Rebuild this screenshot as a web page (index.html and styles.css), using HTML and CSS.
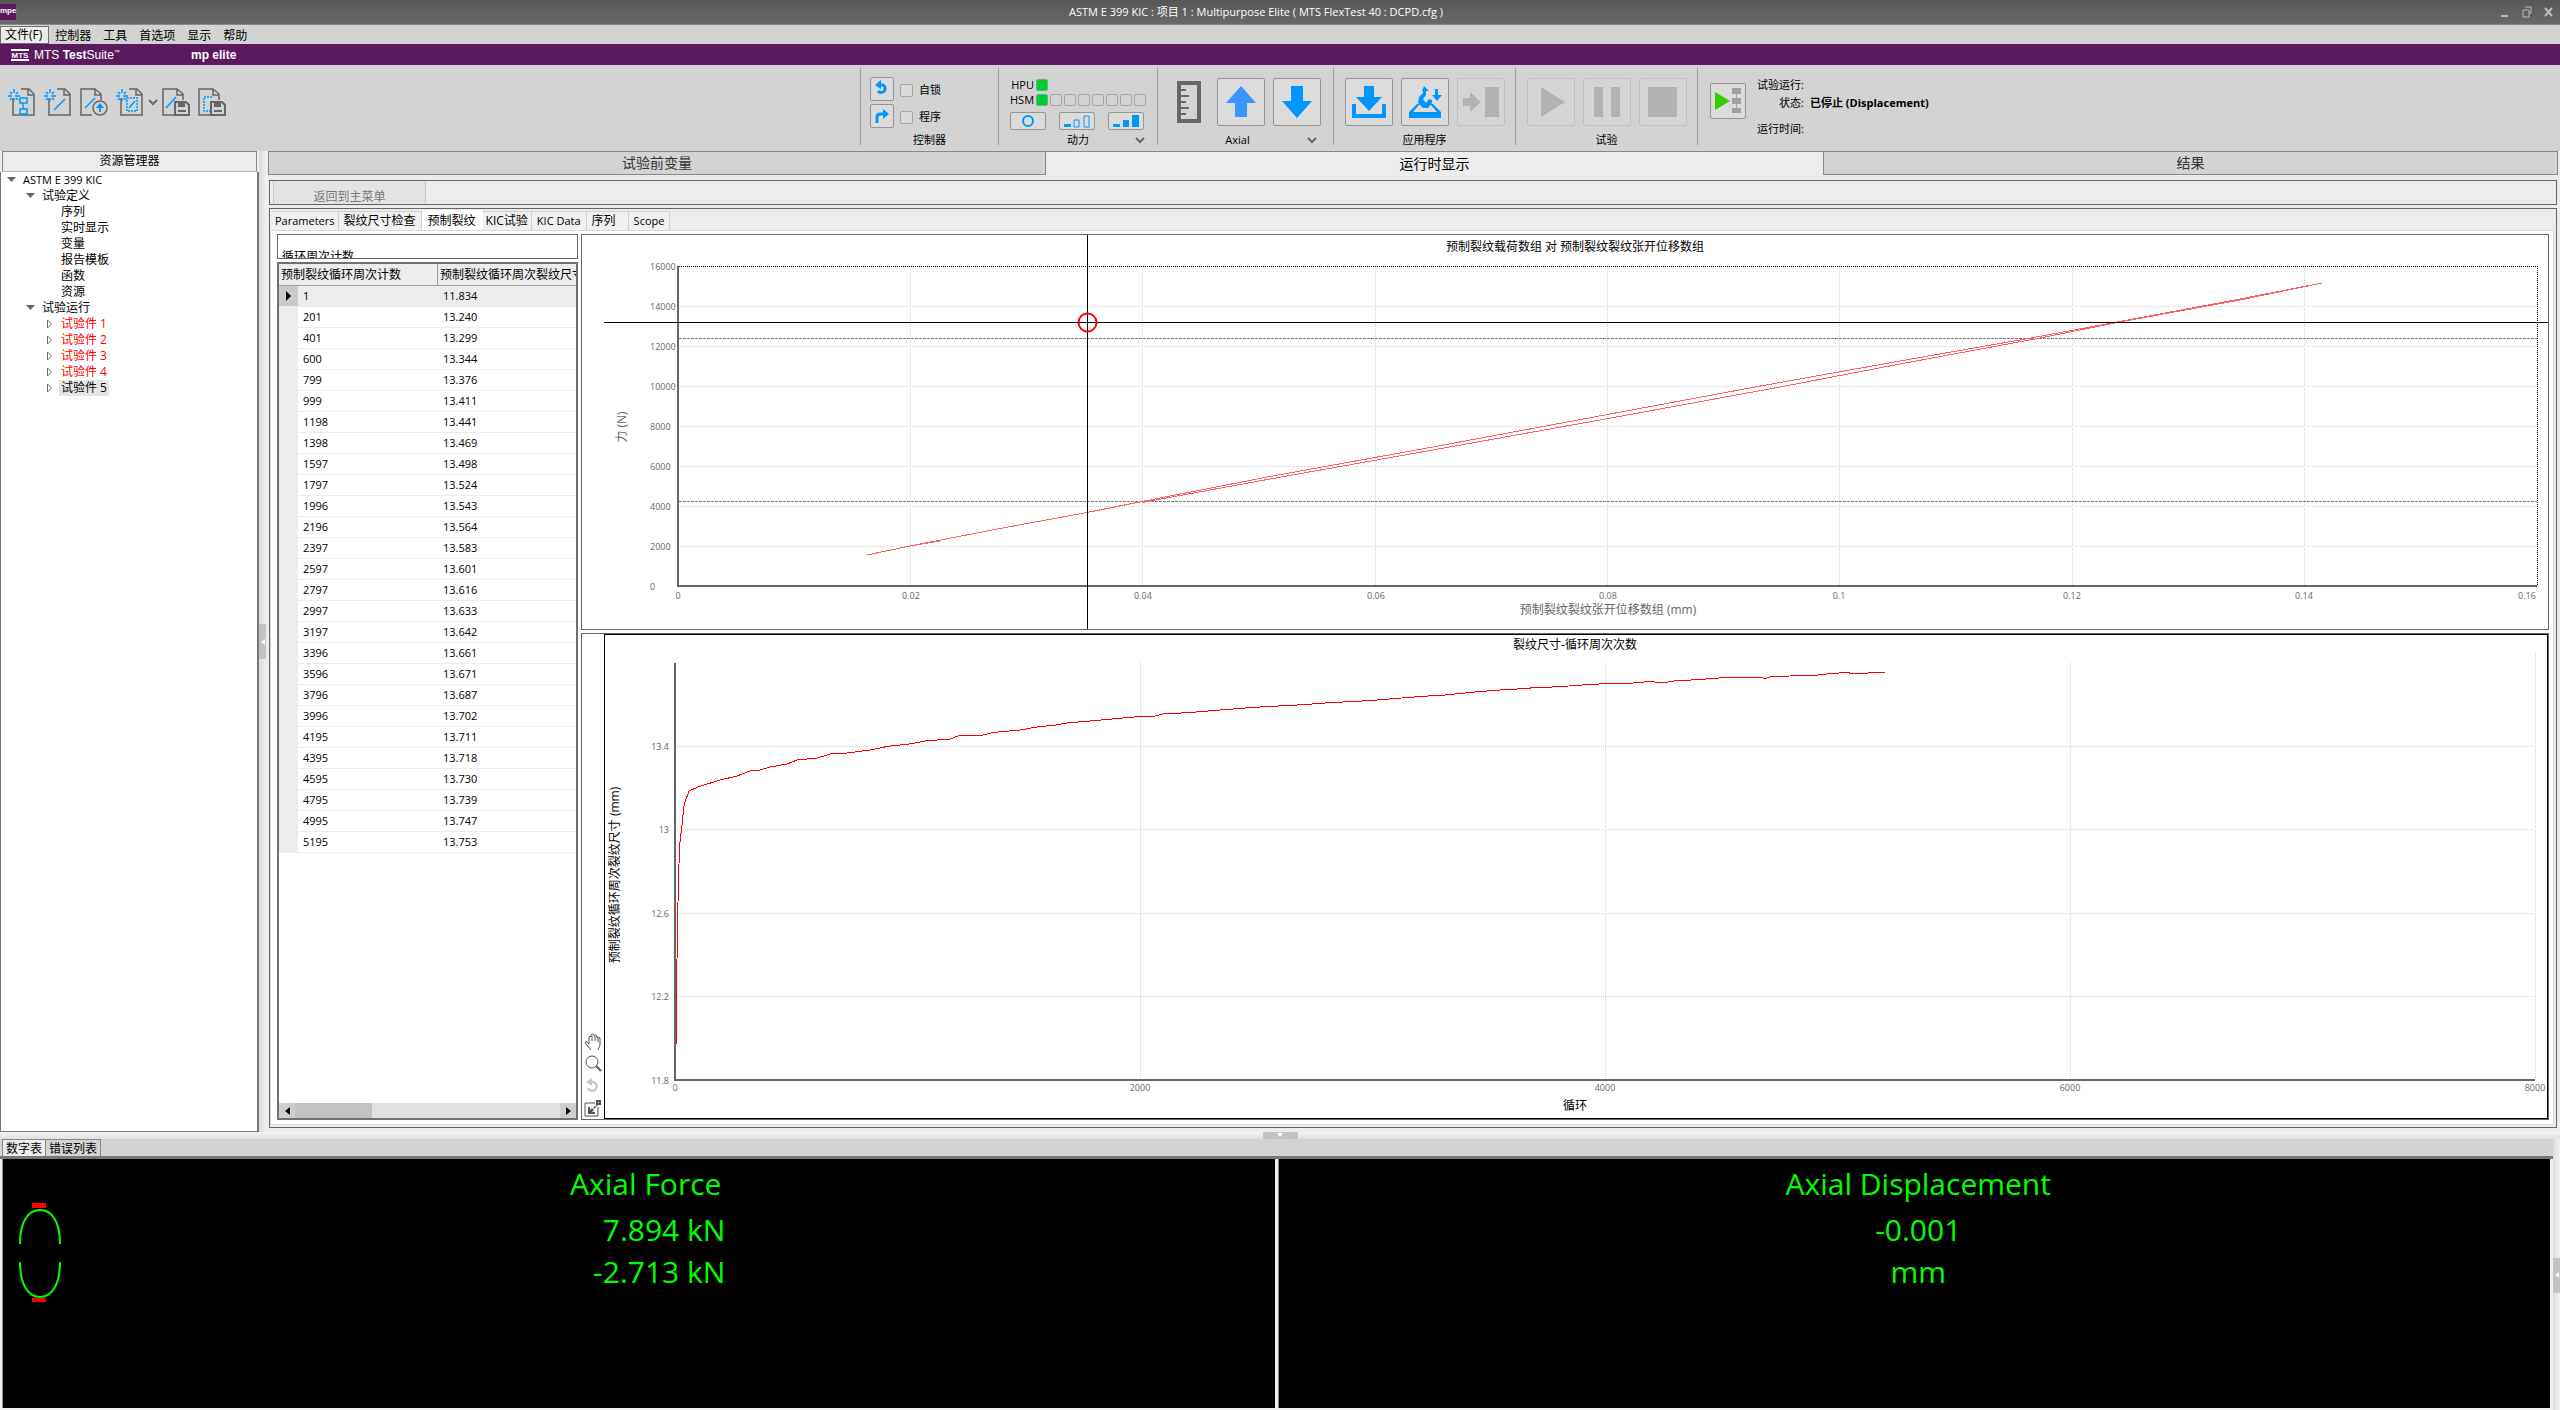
FILE: index.html
```html
<!DOCTYPE html>
<html lang="zh-CN">
<head>
<meta charset="utf-8">
<title>Multipurpose Elite</title>
<link rel="stylesheet" href="styles.css">
</head>
<body>
<header class="titlebar">
  <span class="app-icon">mpe</span>
  <h1>ASTM E 399 KIC : 项目 1 : Multipurpose Elite ( MTS FlexTest 40 : DCPD.cfg )</h1>
  <div class="window-buttons">
    <button aria-label="最小化"><svg width="10" height="12"><path d="M1 9h7v2H1z" fill="#b9bcc0"/></svg></button>
    <button aria-label="还原"><svg width="10" height="12"><path d="M3 1h6v6h-2M1 4h6v7H1z" fill="none" stroke="#b9bcc0"/></svg></button>
    <button aria-label="关闭"><svg width="10" height="12"><path d="M1 2l7 8M8 2L1 10" stroke="#b9bcc0" stroke-width="2"/></svg></button>
  </div>
</header>

<nav class="menubar">
  <button class="active">文件(F)</button><button>控制器</button><button>工具</button><button>首选项</button><button>显示</button><button>帮助</button>
</nav>

<div class="brand">
  <svg width="18" height="12" viewBox="0 0 18 12"><path d="M0 0h18v2H0zM0 10h18v2H0z" fill="#fff"/><text x="9" y="9" text-anchor="middle" class="logo-text">MTS</text></svg>
  <span class="suite">MTS <b>Test</b>Suite<sup>™</sup></span>
  <b class="product">mp elite</b>
</div>

<div class="toolbar">
  <div class="file-tools">
    <button aria-label="新建试验"><svg width="28" height="28"><path d="M5 10v17h21V6l-5-5h-8M20 1v6h6" fill="none" stroke="#666" stroke-width="1.5"/><path d="M12 10h7v5h-7zM12 21h7v5h-7zM15 15v6M0 8h4m3 0h5M6 1v4m0 5v3M2 4l2 2m4 4l2 2M2 12l2-2m4-4l2-2" fill="none" stroke="#0096ff" stroke-width="1.5"/></svg></button>
    <button aria-label="新建试验运行"><svg width="28" height="28"><path d="M5 10v17h21V6l-5-5h-8M20 1v6h6" fill="none" stroke="#666" stroke-width="1.5"/><path d="M10 22l11-11M0 8h4m3 0h5M6 1v4m0 5v3M2 4l2 2m4 4l2 2M2 12l2-2m4-4l2-2" fill="none" stroke="#0096ff" stroke-width="1.5"/></svg></button>
    <button aria-label="打开试验"><svg width="28" height="28"><path d="M12 27H1V1h14l6 5v6M15 1v6h6" fill="none" stroke="#666" stroke-width="1.5"/><path d="M5 20l10-10" stroke="#0096ff" stroke-width="1.5"/><circle cx="20" cy="20" r="7" fill="#d3d3d3" stroke="#666" stroke-width="1.5"/><path d="M20 15l4 5h-3v4h-2v-4h-3z" fill="#0096ff"/></svg></button>
    <button aria-label="从模板新建"><svg width="28" height="28"><path d="M5 10v17h21V6l-5-5h-8M20 1v6h6" fill="none" stroke="#666" stroke-width="1.5"/><path d="M11 10h10v13H11z" fill="none" stroke="#0096ff" stroke-width="1.5" stroke-dasharray="2 1"/><path d="M13 20l6-7M0 8h4m3 0h5M6 1v4m0 5v3M2 4l2 2m4 4l2 2M2 12l2-2m4-4l2-2" fill="none" stroke="#0096ff" stroke-width="1.5"/></svg></button>
    <button class="drop" aria-label="更多"><svg width="10" height="8"><path d="M1 2l4 4 4-4" fill="none" stroke="#666" stroke-width="2"/></svg></button>
    <button aria-label="保存试验"><svg width="28" height="28"><path d="M12 27H1V1h14l6 5v6M15 1v6h6" fill="none" stroke="#666" stroke-width="1.5"/><path d="M4 20l10-11" stroke="#0096ff" stroke-width="1.5"/><path d="M13 14h11l3 3v10H13z" fill="#d3d3d3" stroke="#666" stroke-width="2"/><path d="M16 14h7v5h-7zM16 22h8v2h-8z" fill="#666"/></svg></button>
    <button aria-label="另存为模板"><svg width="28" height="28"><path d="M12 27H1V1h14l6 5v6M15 1v6h6" fill="none" stroke="#666" stroke-width="1.5"/><path d="M14 9H6v14h6" fill="none" stroke="#0096ff" stroke-width="1.5" stroke-dasharray="2 1"/><path d="M13 14h11l3 3v10H13z" fill="#d3d3d3" stroke="#666" stroke-width="2"/><path d="M16 14h7v5h-7zM16 22h8v2h-8z" fill="#666"/></svg></button>
  </div>

  <section class="group controller">
    <div class="lock-rows">
      <div><button class="tool small" aria-label="复位"><svg width="18" height="18"><path d="M6 5h4a4 4 0 1 1-5 6" fill="none" stroke="#0096ff" stroke-width="3"/><path d="M2 5l6-5v9z" fill="#0096ff"/></svg></button><label><input type="checkbox">自锁</label></div>
      <div><button class="tool small" aria-label="重做"><svg width="18" height="18"><path d="M4 16v-6q0-3 3-3h4" fill="none" stroke="#0096ff" stroke-width="3"/><path d="M10 2l6 5-6 5z" fill="#0096ff"/></svg></button><label><input type="checkbox">程序</label></div>
    </div>
    <div class="caption"><span></span><span>控制器</span><span></span></div>
  </section>

  <section class="group power">
    <div class="power-rows">
      <div class="leds"><span>HPU</span><i class="on"></i></div>
      <div class="leds"><span>HSM</span><i class="on"></i><i></i><i></i><i></i><i></i><i></i><i></i><i></i></div>
      <div class="power-buttons">
        <button class="tool flat" aria-label="关闭动力"><svg width="28" height="14"><circle cx="14" cy="7" r="5" fill="none" stroke="#0096ff" stroke-width="2"/></svg></button>
        <button class="tool flat" aria-label="低压"><svg width="28" height="14"><path d="M1 10h7v3H1z" fill="#0096ff"/><path d="M11 6h5v7h-5zM21 2h5v11h-5z" fill="none" stroke="#0096ff"/></svg></button>
        <button class="tool flat" aria-label="高压"><svg width="28" height="14"><path d="M1 10h7v3H1zM11 6h6v7h-6zM20 1h7v12h-7z" fill="#0096ff"/></svg></button>
      </div>
    </div>
    <div class="caption"><span></span><span>动力</span><svg width="10" height="8"><path d="M1 2l4 4 4-4" fill="none" stroke="#666" stroke-width="2"/></svg></div>
  </section>

  <section class="group axial">
    <div class="big-row">
      <svg class="ruler" width="24" height="42"><path d="M2 2h20v38H2z" fill="none" stroke="#666" stroke-width="4"/><path d="M4 9h5M4 15h8M4 21h5M4 27h8M4 33h5" stroke="#666" stroke-width="2"/></svg>
      <button class="tool" aria-label="上升"><svg width="34" height="34"><path d="M17 1l15 17h-9v14H11V18H2z" fill="#3a96ff"/></svg></button>
      <button class="tool" aria-label="下降"><svg width="34" height="34"><path d="M17 33L2 16h9V1h12v15h9z" fill="#0096ff"/></svg></button>
    </div>
    <div class="caption"><span></span><span>Axial</span><svg width="10" height="8"><path d="M1 2l4 4 4-4" fill="none" stroke="#666" stroke-width="2"/></svg></div>
  </section>

  <section class="group apps">
    <div class="big-row">
      <button class="tool" aria-label="下载"><svg width="36" height="34"><path d="M18 26L5 12h8V1h10v11h8z" fill="#0096ff"/><path d="M3 19v12h30V19" fill="none" stroke="#0096ff" stroke-width="4"/></svg></button>
      <button class="tool" aria-label="手动控制"><svg width="36" height="34"><path d="M2 33v-6l8-8h3l-7 8h24l-7-8h3l8 8v6z" fill="#0096ff"/><path d="M15 6L17 1l5 5h-3v4l-3 4 3 4 3-4 3 1v3l-4 5h-5l-5-5 1-6 4-4V6zM30 16l-5-6h3V4h3v6h4z" fill="#0096ff"/></svg></button>
      <button class="tool" disabled aria-label="退出"><svg width="36" height="34"><path d="M22 2h14v30H22zM0 13h7V7l11 10L7 27v-6H0z" fill="#b2b2b2"/></svg></button>
    </div>
    <div class="caption"><span></span><span>应用程序</span><span></span></div>
  </section>

  <section class="group test">
    <div class="big-row">
      <button class="tool" disabled aria-label="运行"><svg width="34" height="34"><path d="M7 2l24 15L7 32z" fill="#b2b2b2"/></svg></button>
      <button class="tool" disabled aria-label="暂停"><svg width="34" height="34"><path d="M4 2h9v30H4zM21 2h9v30h-9z" fill="#b2b2b2"/></svg></button>
      <button class="tool" disabled aria-label="停止"><svg width="34" height="34"><path d="M2 2h29v30H2z" fill="#b2b2b2"/></svg></button>
    </div>
    <div class="caption"><span></span><span>试验</span><span></span></div>
  </section>

  <section class="group status">
    <button class="tool medium" aria-label="运行序列"><svg width="28" height="28"><path d="M1 5l15 9-15 9z" fill="#33cc00"/><path d="M18 1h9v6h-9zM18 11h9v6h-9zM18 21h9v5h-9zM22 7h1v4h-1zM22 17h1v4h-1z" fill="#a0a0a0"/></svg></button>
    <dl>
      <dt>试验运行:</dt><dd></dd>
      <dt>状态:</dt><dd>已停止 (Displacement)</dd>
      <dt>运行时间:</dt><dd></dd>
    </dl>
  </section>
</div>

<main class="workspace">
  <aside class="explorer">
    <h2>资源管理器</h2>
    <ul class="tree">
      <li><span class="root"><svg width="9" height="6"><path d="M0 0h9L4.500 5z" fill="#666"/></svg>ASTM E 399 KIC</span>
        <ul>
          <li><span><svg width="9" height="6"><path d="M0 0h9L4.500 5z" fill="#666"/></svg>试验定义</span>
            <ul class="leaves"><li>序列</li><li>实时显示</li><li>变量</li><li>报告模板</li><li>函数</li><li>资源</li></ul>
          </li>
          <li><span><svg width="9" height="6"><path d="M0 0h9L4.500 5z" fill="#666"/></svg>试验运行</span>
            <ul class="runs">
              <li><span class="failed"><svg width="6" height="10"><path d="M.5 1v8l4-4z" fill="none" stroke="#666"/></svg>试验件 1</span></li>
              <li><span class="failed"><svg width="6" height="10"><path d="M.5 1v8l4-4z" fill="none" stroke="#666"/></svg>试验件 2</span></li>
              <li><span class="failed"><svg width="6" height="10"><path d="M.5 1v8l4-4z" fill="none" stroke="#666"/></svg>试验件 3</span></li>
              <li><span class="failed"><svg width="6" height="10"><path d="M.5 1v8l4-4z" fill="none" stroke="#666"/></svg>试验件 4</span></li>
              <li><span><svg width="6" height="10"><path d="M.5 1v8l4-4z" fill="none" stroke="#666"/></svg><em>试验件 5</em></span></li>
            </ul>
          </li>
        </ul>
      </li>
    </ul>
  </aside>
  <div class="splitter-v"><div class="grip-v"><svg width="4" height="6"><path d="M4 0v6L0 3z" fill="#fff"/></svg></div></div>

  <div class="main">
    <nav class="page-tabs"><button>试验前变量</button><button class="active">运行时显示</button><button>结果</button></nav>
    <div class="page">
      <div class="return-bar"><button disabled>返回到主菜单</button></div>
      <div class="display">
        <nav class="display-tabs"><button class="latin tight">Parameters</button><button>裂纹尺寸检查</button><button class="active">预制裂纹</button><button class="mixed">KIC试验</button><button class="latin">KIC Data</button><button class="wide">序列</button><button class="latin">Scope</button></nav>
        <div class="display-body">
          <div class="data-col">
            <div class="count-box">循环周次计数</div>
            <div class="grid-box">
              <div class="grid-scroll">
              <table>
                <colgroup><col class="c-mark"><col class="c-count"><col></colgroup>
                <thead><tr><th colspan="2">预制裂纹循环周次计数</th><th>预制裂纹循环周次裂纹尺寸</th></tr></thead>
                <tbody>
                  <tr class="current"><td><svg width="5" height="10"><path d="M0 0v10l5-5z"/></svg></td><td>1</td><td>11.834</td></tr>
                  <tr><td></td><td>201</td><td>13.240</td></tr>
                  <tr><td></td><td>401</td><td>13.299</td></tr>
                  <tr><td></td><td>600</td><td>13.344</td></tr>
                  <tr><td></td><td>799</td><td>13.376</td></tr>
                  <tr><td></td><td>999</td><td>13.411</td></tr>
                  <tr><td></td><td>1198</td><td>13.441</td></tr>
                  <tr><td></td><td>1398</td><td>13.469</td></tr>
                  <tr><td></td><td>1597</td><td>13.498</td></tr>
                  <tr><td></td><td>1797</td><td>13.524</td></tr>
                  <tr><td></td><td>1996</td><td>13.543</td></tr>
                  <tr><td></td><td>2196</td><td>13.564</td></tr>
                  <tr><td></td><td>2397</td><td>13.583</td></tr>
                  <tr><td></td><td>2597</td><td>13.601</td></tr>
                  <tr><td></td><td>2797</td><td>13.616</td></tr>
                  <tr><td></td><td>2997</td><td>13.633</td></tr>
                  <tr><td></td><td>3197</td><td>13.642</td></tr>
                  <tr><td></td><td>3396</td><td>13.661</td></tr>
                  <tr><td></td><td>3596</td><td>13.671</td></tr>
                  <tr><td></td><td>3796</td><td>13.687</td></tr>
                  <tr><td></td><td>3996</td><td>13.702</td></tr>
                  <tr><td></td><td>4195</td><td>13.711</td></tr>
                  <tr><td></td><td>4395</td><td>13.718</td></tr>
                  <tr><td></td><td>4595</td><td>13.730</td></tr>
                  <tr><td></td><td>4795</td><td>13.739</td></tr>
                  <tr><td></td><td>4995</td><td>13.747</td></tr>
                  <tr><td></td><td>5195</td><td>13.753</td></tr>
                </tbody>
              </table>
              </div>
              <div class="hscroll">
                <button aria-label="向左"><svg width="5" height="8"><path d="M5 0v8L0 4z"/></svg></button>
                <div class="track"><div class="thumb"></div></div>
                <button aria-label="向右"><svg width="5" height="8"><path d="M0 0v8l5-4z"/></svg></button>
              </div>
            </div>
          </div>

          <div class="chart-col">
            <figure class="chart load">
              <svg viewBox="582 235 1966 394">
                <g class="gridlines">
                  <path d="M680 306.500H2537M680 346.500H2537M680 386.500H2537M680 426.500H2537M680 466.500H2537M680 506.500H2537M680 546.500H2537"/>
                  <path d="M910.500 268V585M1142.500 268V585M1375.500 268V585M1607.500 268V585M1839.500 268V585M2072.500 268V585M2304.500 268V585"/>
                </g>
                <path class="frame" d="M679 266.500H2537.500V586"/>
                <path class="limit" d="M679 338.500H2537M679 501.500H2537"/>
                <path class="axis" d="M678 266V586H2537"/>
                <path class="load-line" d="M867 555L910 546 1000 528.500 1087 512.500 1142 501.500 1270 476.500 1430 447.500 1578 420 1755 387 1900 361 2031 338 2117 322 2240 299 2322 283M2322 283L2240 300 2117 322.500 2040 338 1900 364 1780 387 1600 420 1430 450.500 1270 479 1142 502.500M910 546L940 541"/>
                <path class="cross" d="M1087.500 235V629M604 322.500H2548"/>
                <circle class="cursor" cx="1087.500" cy="322.500" r="9"/>
                <text class="title" x="1575" y="251">预制裂纹载荷数组 对 预制裂纹裂纹张开位移数组</text>
                <g class="ticks-y">
                  <text x="650" y="270">16000</text><text x="650" y="310">14000</text><text x="650" y="350">12000</text><text x="650" y="390">10000</text><text x="650" y="430">8000</text><text x="650" y="470">6000</text><text x="650" y="510">4000</text><text x="650" y="550">2000</text><text x="650" y="590">0</text>
                </g>
                <g class="ticks-x">
                  <text x="678" y="599">0</text><text x="911" y="599">0.02</text><text x="1143" y="599">0.04</text><text x="1376" y="599">0.06</text><text x="1608" y="599">0.08</text><text x="1839" y="599">0.1</text><text x="2072" y="599">0.12</text><text x="2304" y="599">0.14</text><text x="2527" y="599">0.16</text>
                </g>
                <text class="name muted" x="1608" y="614">预制裂纹裂纹张开位移数组 (mm)</text>
                <text class="name muted" transform="translate(626 427) rotate(-90)">力 (N)</text>
              </svg>
            </figure>
            <figure class="chart growth">
              <div class="chart-tools">
                <button aria-label="平移"><svg width="18" height="18"><path d="M7 17L2 11q-2-3 1-2l2 2V4q1-2 2 0V2q1.500-2 3 0v1q2-2 3 0v2q2-2 3 0v7l-2 5M8 3v5M11 3v5M14 5v4" fill="none" stroke="#555"/></svg></button>
                <button aria-label="缩放"><svg width="18" height="18"><circle cx="8" cy="7" r="6" fill="none" stroke="#555"/><path d="M12 11l5 5" stroke="#555" stroke-width="2"/></svg></button>
                <button aria-label="撤销" disabled><svg width="18" height="18"><path d="M7 5h2a4.500 4.500 0 1 1-5 6" fill="none" stroke="#c8c8c8" stroke-width="2.500"/><path d="M2 5l6-4v8z" fill="#c8c8c8"/></svg></button>
                <button aria-label="适应窗口"><svg width="18" height="18"><path d="M11 4H1v13h13v-9" fill="none" stroke="#555"/><path d="M13 2h3v3h-3z" fill="none" stroke="#555" stroke-width="2"/><path d="M4 8v7h7v-2H8l2-2-2-2-2 2V8z" fill="#555"/><path d="M10 9l3-3" stroke="#555" stroke-width="2" stroke-dasharray="2 1"/></svg></button>
              </div>
              <svg class="boxed" viewBox="605 635 1942 483">
                <g class="gridlines">
                  <path d="M677 746.500H2535M677 829.500H2535M677 913.500H2535M677 996.500H2535"/>
                  <path d="M1140.500 663V1079M1605.500 663V1079M2070.500 663V1079M2535.500 653V1079"/>
                </g>
                <path class="axis" d="M675 663V1080H2535"/>
                <path class="growth-line" d="M676.500 1044V988L677.500 930 678.500 875 680 842 682 825 684 806 685 802 689 791 698 787 720 780 737 776 750 771 760 770 770 767 787 764 797 760 817 758 832 753.500 840 754 870 750 887 746.500 913 743.500 925 741 950 739 958 736 983 735 993 732.500 1020 730 1040 726.500 1053 725.500 1067 723 1090 721 1140 716.500 1155 716 1163 714 1190 712.500 1251 707.500 1306 704.500 1325 703 1371 700.500 1420 696.500 1445 695 1475 692 1500 690 1505 689.500 1510 690 1520 688.500 1552 687 1577 685.500 1588 684.500 1593 685 1602 683.500 1622 684 1650 681.500 1655 682 1668 682 1674 681 1700 679.500 1725 677.500 1761 677.500 1765 678.500 1772 676.500 1790 676 1813 675.500 1832 673.500 1847 672.500 1852 673.500 1868 673 1885 672.500"/>
                <text class="title" x="1575" y="649">裂纹尺寸-循环周次次数</text>
                <g class="ticks-y right">
                  <text x="669" y="750">13.4</text><text x="669" y="833">13</text><text x="669" y="917">12.6</text><text x="669" y="1000">12.2</text><text x="669" y="1084">11.8</text>
                </g>
                <g class="ticks-x">
                  <text x="675" y="1091">0</text><text x="1140" y="1091">2000</text><text x="1605" y="1091">4000</text><text x="2070" y="1091">6000</text><text x="2535" y="1091">8000</text>
                </g>
                <text class="name" x="1575" y="1110">循环</text>
                <text class="name" transform="translate(619 875) rotate(-90)">预制裂纹循环周次裂纹尺寸 (mm)</text>
              </svg>
            </figure>
          </div>
        </div>
      </div>
    </div>
  </div>
</main>

<div class="splitter-h"><div class="grip-h"><svg width="6" height="5"><path d="M0 0h6L3 4z" fill="#fff"/></svg></div></div>

<footer class="meters">
  <div class="meters-main">
    <nav class="meter-tabs"><button class="active">数字表</button><button>错误列表</button></nav>
    <div class="meter-row">
      <section class="meter">
        <svg class="gauge" width="48" height="102"><path d="M16 1h14v5H16zM16 96h14v4H16z" fill="#f00"/><path d="M4 42C4 18 13 8 24 8s20 10 20 34M4 60c0 24 9 35 20 35s20-11 20-35" fill="none" stroke="#0f0" stroke-width="2"/></svg>
        <div class="readout force"><h3>Axial Force</h3><p>7.894 kN</p><p>-2.713 kN</p></div>
      </section>
      <section class="meter">
        <div class="readout"><h3>Axial Displacement</h3><p>-0.001</p><p>mm</p></div>
      </section>
    </div>
  </div>
  <div class="side-strip"><div class="grip-side"><svg width="4" height="6"><path d="M4 0v6L0 3z" fill="#fff"/></svg></div></div>
</footer>
</body>
</html>
```
FILE: styles.css
```css
* { box-sizing: border-box; }

body {
  margin: 0;
  min-height: 100vh;
  display: flex;
  flex-direction: column;
  background: #ececec;
  color: #000;
  font: 12px/16px "Open Sans", "Noto Sans CJK SC", sans-serif;
}

h1, h2, h3, p, ul, dl, dd, figure { margin: 0; padding: 0; font-weight: normal; }
ul { list-style: none; }
svg { display: block; }
em { font-style: normal; }
button {
  margin: 0;
  padding: 0;
  border: 0;
  background: none;
  color: inherit;
  font: inherit;
}

/* Title bar */
.titlebar {
  height: 25px;
  display: grid;
  grid-template-columns: 64px 1fr 64px;
  align-items: center;
  background: linear-gradient(#555755, #6a6a6a);
  border-bottom: 1px solid #8a8a8a;
  color: #fff;
}
.app-icon {
  width: 16px;
  height: 16px;
  background: #5b1a5e;
  font: bold 8px/14px "Liberation Sans", sans-serif;
  text-align: center;
}
.titlebar h1 { font-size: 11px; text-align: center; padding-right: 48px; }
.window-buttons { display: flex; gap: 12px; padding-left: 4px; }

/* Menu bar */
.menubar {
  height: 19px;
  display: flex;
  background: #d3d3d3;
}
.menubar button { padding: 1px 6px 0; margin-top: 1px; }
.menubar .active {
  padding: 0 6px 0 4px;
  background: #ececec;
  border: 1px solid #707070;
  line-height: 14px;
}

/* Brand bar */
.brand {
  height: 21px;
  padding: 0 11px;
  display: flex;
  align-items: center;
  background: #5b1a5e;
  color: #fff;
  font-family: "Liberation Sans", sans-serif;
}
.logo-text { font: bold 8px "Liberation Sans", sans-serif; fill: #fff; }
.suite { width: 156px; padding-left: 5px; white-space: nowrap; }
.suite sup { font-size: 6px; line-height: 6px; }
.product { padding-left: 6px; }

/* Toolbar */
.toolbar {
  height: 86px;
  padding: 3px 0 6px;
  display: flex;
  background: #d3d3d3;
}
.file-tools {
  flex: 0 0 860px;
  display: flex;
  gap: 8px;
  padding: 20px 8px 0;
  align-items: flex-start;
}
.file-tools .drop { margin: 0 -4px; padding-top: 10px; }
.group {
  border-left: 1px solid #a0a0a0;
  display: flex;
  flex-direction: column;
  justify-content: space-between;
}
.controller { flex: 0 0 138px; }
.power { flex: 0 0 159px; }
.axial { flex: 0 0 176px; }
.apps, .test { flex: 0 0 182px; }
.caption {
  display: grid;
  grid-template-columns: 1fr auto 1fr;
  align-items: center;
  line-height: 10px;
  font-size: 11px;
}
.caption svg { justify-self: end; margin-right: 12px; }
.axial .caption { padding-right: 16px; }
.axial .caption svg { margin-right: 0; }
.tool {
  width: 48px;
  height: 48px;
  display: grid;
  place-items: center;
  background: #dcdcdc;
  border: 1px solid #969696;
  border-radius: 2px;
}
.tool:disabled { background: #d5d5d5; border-color: #c0c0c0; }
.tool.small { width: 24px; height: 24px; }
.tool.flat { width: 36px; height: 18px; }
.tool.medium { width: 36px; height: 36px; }
.big-row { display: flex; gap: 8px; padding: 10px 0 0 11px; align-items: center; }
.ruler { margin: 0 8px; }
.lock-rows { display: flex; flex-direction: column; gap: 3px; padding: 9px 0 0 9px; }
.lock-rows div { display: flex; align-items: center; }
.lock-rows label { display: flex; align-items: center; gap: 6px; padding: 2px 0 0 6px; font-size: 11px; }
.lock-rows input {
  appearance: none;
  width: 13px;
  height: 13px;
  margin: 0;
  border: 1px solid #a5a5a5;
  border-radius: 2px;
  background: #dadada;
}
.power-rows { padding: 9px 0 0 11px; }
.leds { display: flex; gap: 2px; align-items: center; height: 15px; font-size: 11px; line-height: 15px; }
.leds span { width: 24px; text-align: right; }
.leds i { width: 12px; height: 12px; border: 1px solid #a5a5a5; border-radius: 2px; }
.leds .on { background: #00cc33; border-color: #5fb878; }
.power-buttons { display: flex; gap: 13px; padding-top: 5px; }
.status { flex: 1; flex-direction: row; justify-content: flex-start; padding: 0 0 0 12px; }
.status .tool { margin-top: 15px; }
.status dl {
  display: grid;
  grid-template-columns: 58px auto;
  grid-template-rows: 18px 26px 18px;
  column-gap: 6px;
  padding-top: 8px;
  line-height: 18px;
  font-size: 11px;
}
.status dt { text-align: right; }
.status dd { font-weight: bold; }

/* Workspace */
.workspace { flex: 1 0 auto; display: flex; align-items: stretch; }
.explorer { flex: 0 0 259px; display: flex; flex-direction: column; }
.explorer h2 {
  height: 21px;
  margin: 0 2px;
  border: 1px solid #888;
  border-bottom-color: #bbb;
  font-size: 12px;
  line-height: 18px;
  text-align: center;
}
.tree {
  flex: 1;
  background: #fff;
  border: 1px solid #777;
  border-top: 0;
  border-right-width: 2px;
}
.tree span { display: flex; align-items: center; height: 16px; }
.tree > li { padding-left: 6px; }
.tree > li > span, .tree > li > ul > li > span { gap: 7px; }
.tree > li > ul { padding-left: 19px; }
.tree .root { font-size: 11px; }
.leaves { padding-left: 35px; }
.leaves li { height: 16px; }
.runs { padding-left: 21px; }
.runs span { gap: 8px; }
.runs em { background: #e6e6e6; margin-left: -2px; padding: 0 2px; }
.failed { color: #f00; }

.splitter-v {
  flex: 0 0 8px;
  display: flex;
  align-items: center;
  background: linear-gradient(90deg, #dcdcdc, #f2f2f2);
}
.grip-v { width: 7px; height: 35px; display: grid; place-items: center; background: #c3c3c3; }

.main { flex: 1; min-width: 0; display: flex; flex-direction: column; }
.page-tabs {
  height: 24px;
  padding: 0 2px 0 1px;
  display: grid;
  grid-template-columns: 777fr 778fr 735fr;
}
.page-tabs button {
  background: #d3d3d3;
  border: 1px solid #888;
  border-width: 1px 0 1px 1px;
  color: #333;
  font-size: 14px;
  line-height: 20px;
}
.page-tabs button:last-child { border-right-width: 1px; }
.page-tabs .active { background: #ececec; border-bottom: 0; color: #000; }
.page { flex: 1; display: flex; flex-direction: column; gap: 3px; padding: 5px 3px 4px 2px; }
.return-bar { height: 25px; padding-left: 3px; border: 1px solid #666; overflow: hidden; }
.return-bar button {
  width: 153px;
  height: 23px;
  padding-top: 9px;
  background: #e3e3e3;
  border: 1px solid #c8c8c8;
  border-width: 0 1px;
  color: #777;
  line-height: 14px;
}
.display { flex: 1; display: flex; flex-direction: column; border: 1px solid #666; padding: 0 2px 2px 0; }
.display-tabs { height: 21px; padding-left: 2px; display: flex; align-items: flex-end; }
.display-tabs button {
  height: 19px;
  padding: 0 5px;
  border: 1px solid #d0d0d0;
  border-width: 1px 1px 0 0;
  background: #f0f0f0;
  line-height: 18px;
}
.display-tabs .latin { font-size: 11px; }
.display-tabs .tight { padding: 0 3px; }
.display-tabs .mixed { padding: 0 3px; }
.display-tabs .wide { padding-right: 12px; }
.display-tabs .active {
  height: 20px;
  padding: 0 6px;
  background: #fff;
  border-color: #fff;
  line-height: 16px;
}
.display-body {
  flex: 1;
  display: flex;
  gap: 3px;
  padding: 3px 4px 4px 6px;
  background: #fff;
  border: 1px solid #d8d8d8;
}

/* Cycle table */
.data-col { flex: 0 0 301px; display: flex; flex-direction: column; gap: 3px; }
.count-box { height: 25px; padding: 14px 4px 0; border: 1px solid #666; overflow: hidden; line-height: 16px; }
.grid-box { flex: 1; display: flex; flex-direction: column; border: 2px solid #707070; }
.grid-scroll { flex: 1; overflow: hidden; }
table { width: 100%; table-layout: fixed; border-collapse: separate; border-spacing: 0; font-size: 11px; }
.c-mark { width: 19px; }
.c-count { width: 140px; }
th {
  height: 22px;
  padding: 0 0 0 2px;
  background: #ececec;
  border: 1px solid #a0a0a0;
  border-width: 0 1px 1px 0;
  font-size: 12px;
  font-weight: normal;
  line-height: 20px;
  text-align: left;
  white-space: nowrap;
  overflow: hidden;
}
th:last-child { border-right: 0; }
td { height: 21px; padding: 0 5px; border-bottom: 1px solid #ececec; line-height: 19px; vertical-align: top; }
td:first-child { background: #ececec; vertical-align: middle; padding: 0 7px; }
.current td { background: #ececec; }
.current td:first-child { background: #cacaca; }
.hscroll { height: 15px; display: flex; background: #cfcfcf; }
.hscroll button { width: 16px; display: grid; place-items: center; }
.track { flex: 1; background: #e1e1e1; }
.thumb { width: 29%; height: 100%; background: #c2c2c2; }

/* Charts */
.chart-col { flex: 1; min-width: 0; display: flex; flex-direction: column; gap: 3px; }
.chart { border: 1px solid #666; display: flex; }
.chart > svg { flex: 1; min-width: 0; }
.chart-tools {
  flex: 0 0 22px;
  display: flex;
  flex-direction: column;
  justify-content: flex-end;
  gap: 4px;
  padding: 0 0 2px 2px;
}
.boxed { border: 1px solid #000; }
.chart path { shape-rendering: crispEdges; }
.gridlines path { stroke: #d6d6d6; stroke-dasharray: 1 1; fill: none; }
.frame { stroke: #000; stroke-dasharray: 1 1; fill: none; }
.limit { stroke: #777; stroke-dasharray: 3 1; fill: none; }
.axis { stroke: #666; stroke-width: 2; fill: none; }
.load-line { stroke: #ff6060; fill: none; }
.growth-line { stroke: #f00; fill: none; }
.cross { stroke: #000; fill: none; }
.cursor { stroke: #f00; stroke-width: 2; fill: none; }
.chart text { font-size: 9px; fill: #666; }
.chart .title, .chart .name { font-size: 12px; fill: #000; text-anchor: middle; }
.chart .muted { fill: #666; }
.ticks-x { text-anchor: middle; }
.right { text-anchor: end; }
.chart-tools path, .chart-tools circle { shape-rendering: auto; }

/* Bottom meters */
.splitter-h { height: 7px; display: flex; justify-content: center; background: linear-gradient(#f2f2f2, #e0e0e0); }
.grip-h { width: 35px; height: 7px; display: grid; place-items: center; background: #c3c3c3; }
.meters { height: 272px; display: flex; }
.meters-main { flex: 1; display: flex; flex-direction: column; background: #d3d3d3; }
.meter-tabs { height: 17px; padding-left: 2px; display: flex; }
.meter-tabs button { padding: 0 3px; border: 1px solid #888; border-bottom: 0; line-height: 15px; }
.meter-tabs .active { background: #ececec; border-right: 0; }
.meter-row {
  flex: 1;
  display: flex;
  gap: 3px;
  padding: 0 3px 2px 2px;
  background: #f0f0f0;
  border-top: 3px solid #777;
  border-bottom: 1px solid #999;
}
.meter {
  flex: 1 1 0;
  position: relative;
  padding: 4px 0 0 8px;
  display: flex;
  justify-content: center;
  background: #000;
  border-left: 1px solid #888;
  color: #0f0;
}
.gauge { position: absolute; left: 13px; top: 43px; }
.readout { text-align: center; font-size: 30px; line-height: 42px; }
.readout h3 { font-size: 30px; line-height: 42px; padding-bottom: 4px; }
.force { text-align: right; padding-left: 10px; }
.force h3 { padding-right: 4px; }
.side-strip { flex: 0 0 7px; display: flex; align-items: center; background: linear-gradient(90deg, #dcdcdc, #f2f2f2); }
.grip-side { width: 7px; height: 35px; display: grid; place-items: center; background: #c3c3c3; }
```
